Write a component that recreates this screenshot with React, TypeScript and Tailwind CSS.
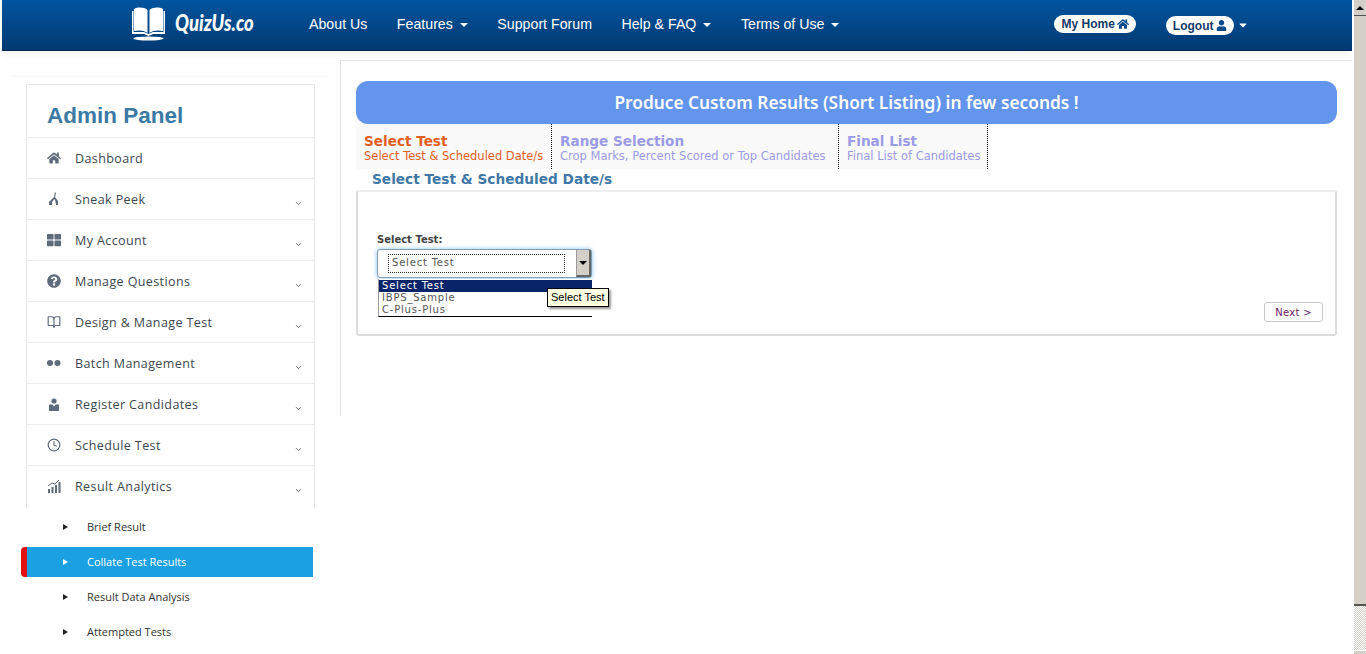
import React from "react";
import { FaHome, FaUser, FaThLarge, FaQuestionCircle, FaCaretDown } from "react-icons/fa";
import { LuBookOpen, LuClock, LuChevronDown } from "react-icons/lu";

const Caret = () => <span className="inline-block ml-[7px] align-middle w-0 h-0 border-x-[4px] border-x-transparent border-t-[4px] border-t-white" />;

const NavItem = ({ label, caret }: { label: string; caret?: boolean }) => (
  <a className="text-white text-[14.2px] whitespace-nowrap">{label}{caret && <Caret />}</a>
);

const PeekIcon = () => (
  <svg width="12" height="14" viewBox="0 0 12 14" fill="#5f6b7a"><path d="M7 0l1 1-1 4 3 4v4H8l-.5-3.500L6.500 7 4 10v3H1v-3l5-5z" /></svg>
);
const DotsIcon = () => (
  <svg width="14" height="8" viewBox="0 0 14 8" fill="#5f6b7a"><circle cx="3" cy="4" r="3" /><circle cx="10.500" cy="4" r="3" /></svg>
);
const CandIcon = () => (
  <svg width="12" height="13" viewBox="0 0 12 13" fill="#5f6b7a"><circle cx="6" cy="3" r="2.600" /><path d="M1 6.500h3.500L6 8.500l1.500-2H11v6.500H1z" /></svg>
);
const ChartIcon = () => (
  <svg width="14" height="14" viewBox="0 0 14 14" fill="#5f6b7a"><path d="M1 10h2v4H1zM4.500 8h2v6h-2zM8 6h2v8H8zM11.500 3h2v11h-2z" /><path d="M1 7l4-3 3 1 4-4" stroke="#5f6b7a" fill="none" /></svg>
);

const menu: { label: string; icon: React.ReactNode; chevron: boolean }[] = [
  { label: "Dashboard", icon: <FaHome size={14} color="#5f6b7a" />, chevron: false },
  { label: "Sneak Peek", icon: <PeekIcon />, chevron: true },
  { label: "My Account", icon: <FaThLarge size={14} color="#5f6b7a" />, chevron: true },
  { label: "Manage Questions", icon: <FaQuestionCircle size={14} color="#5f6b7a" />, chevron: true },
  { label: "Design & Manage Test", icon: <LuBookOpen size={14} color="#5f6b7a" />, chevron: true },
  { label: "Batch Management", icon: <DotsIcon />, chevron: true },
  { label: "Register Candidates", icon: <CandIcon />, chevron: true },
  { label: "Schedule Test", icon: <LuClock size={14} color="#5f6b7a" />, chevron: true },
  { label: "Result Analytics", icon: <ChartIcon />, chevron: true },
];

const subs = ["Brief Result", "Collate Test Results", "Result Data Analysis", "Attempted Tests"];

const Tab = ({ title, sub, active, w }: { title: string; sub: string; active?: boolean; w: string }) => (
  <div className={`${w} h-full bg-[#f9f9f9] border-r border-dotted border-black pl-2 pt-[10px] font-['DejaVu_Sans',sans-serif] ${active ? "text-[#e2601f]" : "text-[#9b9be6]"}`}>
    <div className="text-[13.6px] font-bold leading-[15px]">{title}</div>
    <div className="text-[11.5px] leading-[15px] whitespace-nowrap">{sub}</div>
  </div>
);

export default function App() {
  return (
    <div className="flex h-[654px] w-[1366px] overflow-hidden bg-white pl-[2px] font-['Liberation_Sans',sans-serif]">
      <div className="flex-1 min-w-0 flex flex-col">
        <header className="h-[51px] shrink-0 flex items-center bg-gradient-to-b from-[#01549f] to-[#033a72] border-b border-[#02264f] shadow-[0_4px_8px_rgba(0,0,0,0.05)]">
          <div className="w-[129px] shrink-0" />
          <svg width="35" height="36" viewBox="0 0 35 36" fill="white" className="mb-[4px] shrink-0">
            <path d="M3 4v22c5-1 10-1 13.500 2V5C13 2 7 2 3 4z" />
            <path d="M32 4v22c-5-1-10-1-13.500 2V5C22 2 28 2 32 4z" />
            <path d="M1 6v23h12l4.500 2 4.500-2h12V6h-1.500v21H22l-4.500 2-4.500-2H2.500V6z" />
            <ellipse cx="17.500" cy="33.500" rx="15" ry="2" />
          </svg>
          <span className="ml-[9px] w-[100px] text-white text-[22px] font-black italic font-['Lato',sans-serif] origin-left scale-x-[0.84] whitespace-nowrap mb-[5px]">QuizUs.co</span>
          <div className="ml-[34px] flex gap-[29.500px] items-center mb-[1px]">
            <NavItem label="About Us" />
            <NavItem label="Features" caret />
            <NavItem label="Support Forum" />
            <NavItem label="Help & FAQ" caret />
            <NavItem label="Terms of Use" caret />
          </div>
          <div className="ml-[215px] flex items-center h-[18px] mb-[2px] px-[7px] rounded-full bg-white text-[#153a6b] text-[12px] font-bold whitespace-nowrap gap-[2px]">
            My Home <FaHome size={12} color="#0a4a8a" />
          </div>
          <div className="ml-[30px] flex items-center h-[19px] mt-[1px] px-[7px] rounded-full bg-white text-[#153a6b] text-[12px] font-bold whitespace-nowrap gap-[3px]">
            Logout <FaUser size={11} color="#0a4a8a" />
          </div>
          <FaCaretDown size={12} color="white" className="ml-[3px]" />
        </header>

        <div className="flex-1 min-h-0 flex">
          <aside className="w-[338px] shrink-0 pt-[25px] pl-[10px]">
            <div className="w-[316px] border-t border-[#f7f7f7]" />
            <div className="ml-[14px] mt-[7px] w-[289px] h-[424px] border border-b-0 border-[#e8e8e8]">
              <div className="h-[52px] pl-[20px] pt-[17px] text-[22.5px] leading-[28px] font-bold text-[#3b7aa4]">Admin Panel</div>
              {menu.map((m) => (
                <div key={m.label} className="h-[41px] border-t border-[#ececec] flex items-center pl-[20px] pr-[11px] font-['Open_Sans',sans-serif] text-[12.5px] tracking-[0.4px] text-[#3d4650]">
                  <span className="w-[14px] flex justify-center shrink-0">{m.icon}</span>
                  <span className="ml-[14px] flex-1 mt-[3px]">{m.label}</span>
                  {m.chevron && <LuChevronDown size={9} color="#444" className="mt-[8px]" />}
                </div>
              ))}
            </div>
            <div className="w-[292px] ml-[9px] mt-[4px]">
              {subs.map((s, i) => (
                <div key={s} className={`h-[30px] mt-[5px] first:mt-0 flex items-center font-['Open_Sans',sans-serif] text-[11px] ${i === 1 ? "bg-[#1ba1e2] text-white border-l-[6px] border-l-[#e01010] rounded-l-[4px] pl-[36px]" : "text-[#333] pl-[42px]"}`}>
                  <span className={`w-0 h-0 border-y-[3px] border-y-transparent border-l-[5px] ${i === 1 ? "border-l-white" : "border-l-[#222]"}`} />
                  <span className="ml-[19px]">{s}</span>
                </div>
              ))}
            </div>
          </aside>

          <main className="flex-1 min-w-0 relative pt-[9px]">
            <div className="h-[356px] border-l border-t border-[#e4e4e4] pl-[15px] pt-[20px] pr-[15px]">
              <div className="h-[43px] rounded-[12px] bg-[#6495ed] flex items-center justify-center text-white font-['Noto_Sans',sans-serif] font-semibold text-[17.3px] pt-[1px]">
                Produce Custom Results (Short Listing) in few seconds !
              </div>
              <div className="flex h-[45px]">
                <Tab active w="w-[196px]" title="Select Test" sub="Select Test & Scheduled Date/s" />
                <Tab w="w-[287px]" title="Range Selection" sub="Crop Marks, Percent Scored or Top Candidates" />
                <Tab w="w-[149px]" title="Final List" sub="Final List of Candidates" />
              </div>
              <h2 className="mt-[2px] ml-[16px] h-[19px] text-[13.7px] leading-[17px] font-bold text-[#3f77a6] font-['DejaVu_Sans',sans-serif]">Select Test &amp; Scheduled Date/s</h2>
              <section className="relative h-[146px] border-2 border-[#dcdcdc] border-t-[#eeeeee] rounded-[3px] pl-[19px] pt-[41px] font-['DejaVu_Sans',sans-serif]">
                <div className="text-[10px] leading-[14px] font-bold text-[#444]">Select Test:</div>
                <div className="mt-[2px] w-[215px] h-[29px] flex items-center border border-[#7f9db9] rounded-[3px] shadow-[0_0_5px_#8ec4ee] pl-[10px] bg-white">
                  <div className="w-[177px] h-[19px] border border-dotted border-[#333] flex items-center pl-[3px] pb-[3px] text-[10px] tracking-[0.8px] text-[#555]">Select Test</div>
                  <div className="ml-auto w-[15px] h-[27px] bg-[#d4d0c8] border-l border-[#9a9a9a] border-r-2 border-b-2 border-r-[#666] border-b-[#666] flex items-center justify-center">
                    <span className="w-0 h-0 border-x-[4px] border-x-transparent border-t-[4px] border-t-black" />
                  </div>
                </div>
                <div className="absolute left-[20px] top-[87px] w-[214px] h-[38px] bg-white border-l border-l-[#999] border-b border-b-black text-[10px] leading-[12px] tracking-[0.8px] text-[#555] pt-[1px]">
                  <div className="h-[12px] pl-[3px] bg-[#0a246a] text-white">Select Test</div>
                  <div className="pl-[3px]">IBPS_Sample</div>
                  <div className="pl-[3px]">C-Plus-Plus</div>
                </div>
                <div className="absolute left-[189px] top-[96px] h-[19px] px-[3px] flex items-center bg-[#ffffe1] border border-black shadow-[2px_2px_2px_rgba(0,0,0,0.4)] text-[11px] text-black font-['Liberation_Sans',sans-serif] whitespace-nowrap">Select Test</div>
                <button className="absolute right-[12px] top-[110px] w-[59px] h-[20px] border border-[#c8c8c8] rounded-[3px] text-[10px] tracking-[0.3px] text-[#6a1b6a] bg-white">Next &gt;</button>
              </section>
            </div>
          </main>
        </div>
      </div>

      <div className="w-[14px] shrink-0 flex flex-col border-l-2 border-white bg-[#d4d0c8]">
        <div className="h-[16px] border-b border-[#555] flex items-center justify-center">
          <span className="w-0 h-0 border-x-[4px] border-x-transparent border-b-[4px] border-b-black" />
        </div>
        <div className="h-[589px] mt-px border-b-2 border-[#555]" />
        <div className="h-[44px] bg-[repeating-conic-gradient(#d4d0c8_0_25%,#ffffff_0_50%)] bg-[length:2px_2px]" />
        <div className="flex-1 border-t border-white" />
      </div>
    </div>
  );
}
